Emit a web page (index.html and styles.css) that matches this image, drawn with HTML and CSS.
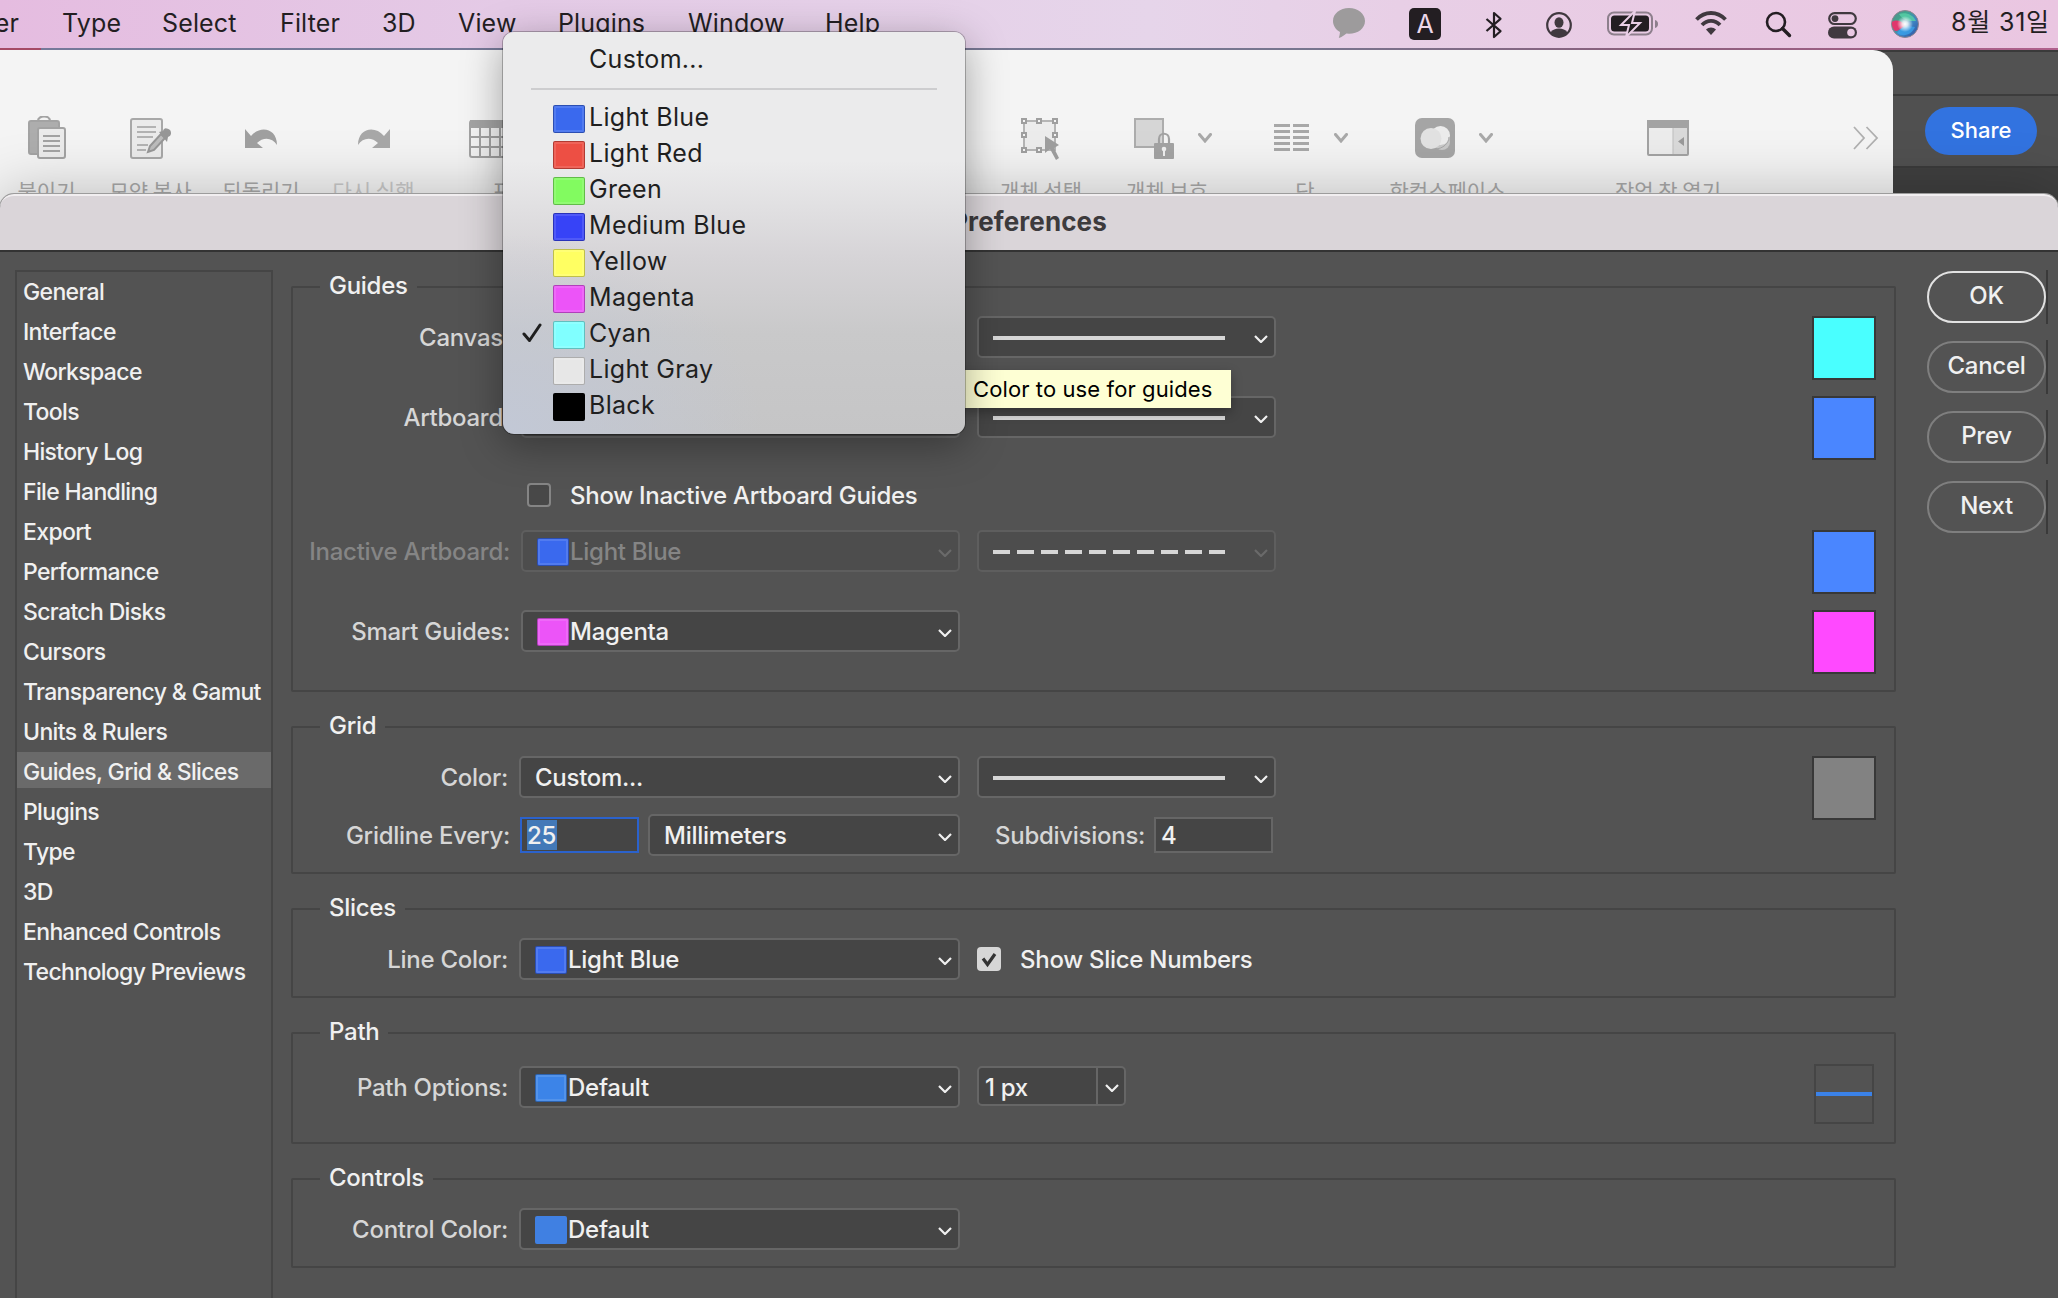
FILE: index.html
```
<!DOCTYPE html>
<html lang="en">
<head>
    <meta charset="UTF-8">
    <title>Preferences</title>
    <link rel="stylesheet" href="styles.css">
</head>
<body>
    <!-- Shared icons -->
    <svg class="defs" width="0" height="0">
        <symbol id="chevron" viewBox="0 0 14 8"><path d="M1 1l6 6 6-6" fill="none" stroke="currentColor" stroke-width="2.2"/></symbol>
        <symbol id="chevron-bold" viewBox="0 0 14 10"><path d="M1.5 1.5L7 8l5.500-6.500" fill="none" stroke="currentColor" stroke-width="3" stroke-linecap="round"/></symbol>
    </svg>

    <header class="menubar">
        <nav class="menus">
            <span class="m-layer">er</span>
            <span class="m-type">Type</span>
            <span class="m-select">Select</span>
            <span class="m-filter">Filter</span>
            <span class="m-3d">3D</span>
            <span class="m-view">View</span>
            <span class="m-plugins">Plugins</span>
            <span class="m-window">Window</span>
            <span class="m-help">Help</span>
        </nav>
        <div class="status">
            <svg class="s-chat" width="32" height="30" viewBox="0 0 32 30"><path d="M16 0C7 0 0 5.600 0 13c0 4.600 2.700 8.600 7 11-.1 2-.6 4-1.200 6 3-.8 5.600-2.600 7.600-4.400l2.600.2c9 0 16-5.500 16-12.800S25 0 16 0z" fill="#9d9b9c"/></svg>
            <span class="s-input">A</span>
            <svg class="s-bt" width="18" height="28" viewBox="0 0 18 28"><path d="M1.500 8l14 12.200L9 26V2l6.500 5.800L1.500 20" fill="none" stroke="#231e22" stroke-width="2.200" stroke-linejoin="round"/></svg>
            <svg class="s-user" width="26" height="26" viewBox="0 0 26 26"><circle cx="13" cy="13" r="11.800" fill="none" stroke="#40393f" stroke-width="2.200"/><ellipse cx="13" cy="10.500" rx="4.500" ry="5.200" fill="#40393f"/><path d="M4.500 20.500c2-3 5-4 8.500-4s6.500 1 8.500 4c-2 2.600-5 4-8.500 4s-6.500-1.400-8.500-4z" fill="#40393f"/></svg>
            <svg class="s-battery" width="52" height="26" viewBox="0 0 52 26"><rect x="1" y="1.500" width="44" height="22" rx="6" fill="none" stroke="#8d7f8c" stroke-width="2"/><path d="M48 9v8c2-.6 3-2 3-4s-1-3.400-3-4z" fill="#8d7f8c"/><rect x="4" y="4.500" width="38" height="16" rx="3.500" fill="#231e22"/><path d="M28 0L14 14h8l-3 12 14-14h-8z" fill="#231e22" stroke="#e9cee6" stroke-width="2"/></svg>
            <svg class="s-wifi" width="34" height="26" viewBox="0 0 34 26"><path d="M2.500 9.500C11 .8 23 .8 31.500 9.500M8 15c5-5.600 13-5.600 18 0" fill="none" stroke="#40393f" stroke-width="3.800"/><path d="M17 25l-5-5.400c2.600-2.700 7.400-2.700 10 0z" fill="#40393f"/></svg>
            <svg class="s-search" width="27" height="27" viewBox="0 0 27 27"><circle cx="11" cy="11" r="9" fill="none" stroke="#231e22" stroke-width="2.600"/><path d="M17.500 17.500l7 7" stroke="#231e22" stroke-width="3.400" stroke-linecap="round"/></svg>
            <svg class="s-control" width="29" height="27" viewBox="0 0 29 27"><rect x="1.200" y="1.200" width="26.600" height="10.800" rx="5.400" fill="none" stroke="#40393f" stroke-width="2.200"/><circle cx="7" cy="6.600" r="3.400" fill="#40393f"/><rect x="0" y="14.500" width="29" height="12" rx="6" fill="#40393f"/><circle cx="23" cy="20.500" r="3.800" fill="#eac9e3"/></svg>
            <svg class="s-siri" width="28" height="28" viewBox="0 0 28 28">
                <defs>
                    <linearGradient id="siri" x1="0" y1="0" x2="1" y2="1"><stop offset="0" stop-color="#5c7f94"/><stop offset=".3" stop-color="#3fa58a"/><stop offset=".6" stop-color="#3f86c4"/><stop offset="1" stop-color="#2b4a9b"/></linearGradient>
                    <radialGradient id="siri-glow"><stop offset="0" stop-color="#fff"/><stop offset=".35" stop-color="#fff" stop-opacity=".8"/><stop offset="1" stop-color="#fff" stop-opacity="0"/></radialGradient>
                </defs>
                <circle cx="14" cy="14" r="13.500" fill="url(#siri)" stroke="#8f8390"/>
                <path d="M1 12c4-3 10-1 13 3-4 4-7 6-10 6-2-2-3.500-5-3-9z" fill="#e0376d"/>
                <path d="M8 4c6-2 14 0 17 7-5 0-12 1-17-7z" fill="#58d1a6" opacity=".8"/>
                <path d="M6 23c4-6 9-8 18-6-3 7-11 11-18 6z" fill="#3aa0ea" opacity=".8"/>
                <circle cx="14" cy="14" r="8" fill="url(#siri-glow)"/>
            </svg>
            <span class="s-date">8월 31일</span>
        </div>
    </header>

    <div class="ps-window">
        <div class="ps-tabs"></div>
        <div class="ps-options"><span class="share">Share</span></div>
    </div>

    <div class="hwp-window">
        <div class="tool">
            <svg width="38" height="44" viewBox="0 0 38 44"><path d="M10 5c0-6 12-6 12 0" fill="none" stroke="#a3a3a3" stroke-width="2.200"/><rect x="1" y="5" width="30" height="33" rx="2" fill="#adadad" stroke="#a3a3a3" stroke-width="2"/><rect x="10" y="12" width="27" height="30" rx="2" fill="#ebebeb" stroke="#a3a3a3" stroke-width="2"/><path d="M15 20h17M15 25h17M15 30h17M15 35h17" stroke="#a3a3a3" stroke-width="2"/></svg>
            <span>붙이기</span>
        </div>
        <div class="tool">
            <svg width="42" height="44" viewBox="0 0 42 44"><rect x="1" y="3" width="31" height="39" rx="2" fill="#ebebeb" stroke="#a8a8a8" stroke-width="2"/><path d="M7 11h19M7 16h19M7 21h16M7 29h11M7 34h9" stroke="#b3b3b3" stroke-width="2"/><path d="M18 36l2-6 11-12 4 4-11 12z" fill="#bdbdbd" stroke="#979797" stroke-width="2"/><path d="M29 16l4-1c1-4 4-3 7-1 2 3 1 6-2 7l-1 5z" fill="#979797"/></svg>
            <span>모양 복사</span>
        </div>
        <div class="tool">
            <svg width="34" height="44" viewBox="0 0 34 44"><path d="M1 13v19h18l-6-5c6-6 15-6 20 2 0-17-17-20-26-9z" fill="#a0a0a0"/></svg>
            <span>되돌리기</span>
        </div>
        <div class="tool dim">
            <svg width="34" height="44" viewBox="0 0 34 44"><path d="M33 13v19H15l6-5C15 21 6 21 1 29c0-17 17-20 26-9z" fill="#a8a8a8"/></svg>
            <span>다시 실행</span>
        </div>
        <div class="tool more">
            <div class="glyph">
                <svg width="40" height="44" viewBox="0 0 40 44"><rect x="1" y="5" width="38" height="36" rx="2" fill="#f5f5f5" stroke="#a3a3a3" stroke-width="2"/><path d="M1 4h38v8H1z" fill="#a3a3a3"/><path d="M1 21h38M1 31h38M11 12v29M21 12v29M31 12v29" stroke="#a3a3a3" stroke-width="2"/></svg>
                <svg width="14" height="10"><use href="#chevron-bold"/></svg>
            </div>
            <span>표</span>
        </div>
        <div class="tool-space"></div>
        <div class="tool">
            <svg width="40" height="44" viewBox="0 0 40 44"><rect x="3" y="5" width="31" height="29" fill="#ececec" stroke="#b5b5b5" stroke-width="2"/><g fill="#f5f5f5" stroke="#9f9f9f" stroke-width="2"><rect x="1" y="3" width="4" height="4"/><rect x="16" y="3" width="4" height="4"/><rect x="32" y="3" width="4" height="4"/><rect x="1" y="17" width="4" height="4"/><rect x="32" y="17" width="4" height="4"/><rect x="1" y="32" width="4" height="4"/><rect x="16" y="32" width="4" height="4"/></g><path d="M24 20v17l5-4 6 11 3-2-5-10 5-3z" fill="#9f9f9f"/></svg>
            <span>개체 선택</span>
        </div>
        <div class="tool more">
            <div class="glyph">
                <svg width="40" height="44" viewBox="0 0 40 44"><rect x="1" y="3" width="28" height="28" fill="#d6d6d6" stroke="#adadad" stroke-width="2"/><path d="M25 28v-5c0-7 10-7 10 0v5" fill="none" stroke="#a3a3a3" stroke-width="2.200"/><rect x="20" y="27" width="20" height="16" rx="1" fill="#a3a3a3"/><circle cx="30" cy="33" r="2.300" fill="#f0f0f0"/><path d="M29 34h2v6h-2z" fill="#f0f0f0"/></svg>
                <svg width="14" height="10"><use href="#chevron-bold"/></svg>
            </div>
            <span>개체 보호</span>
        </div>
        <div class="tool more">
            <div class="glyph">
                <svg width="36" height="44" viewBox="0 0 36 44"><path d="M0 9.500h16m3 0h16M0 15.500h16m3 0h16M0 21.500h16m3 0h16M0 27.500h16m3 0h16M0 33.500h16m3 0h16" stroke="#a8a8a8" stroke-width="3"/></svg>
                <svg width="14" height="10"><use href="#chevron-bold"/></svg>
            </div>
            <span>단</span>
        </div>
        <div class="tool more">
            <div class="glyph">
                <svg width="40" height="44" viewBox="0 0 40 44"><rect x="0" y="2" width="40" height="40" rx="7" fill="#a5a5a5"/><circle cx="27" cy="26" r="8" fill="#c9c9c9"/><circle cx="25.500" cy="19.500" r="9.500" fill="#ececec"/><circle cx="16" cy="22.500" r="10.500" fill="#e2e2e2"/><path d="M20 33c8 0 14-6 14-12" fill="none" stroke="#a5a5a5" stroke-width="1"/></svg>
                <svg width="14" height="10"><use href="#chevron-bold"/></svg>
            </div>
            <span>한컴스페이스</span>
        </div>
        <div class="tool">
            <svg width="42" height="44" viewBox="0 0 42 44"><rect x="1" y="5" width="40" height="34" rx="1" fill="#ececec" stroke="#a3a3a3" stroke-width="2"/><path d="M26 12h14v26H26z" fill="#dadada"/><path d="M26 12v26" stroke="#bdbdbd"/><path d="M0 4h42v8H0z" fill="#a3a3a3"/><path d="M37 21v9l-6-4.500z" fill="#9a9a9a"/></svg>
            <span>작업 창 열기</span>
        </div>
        <svg class="overflow" width="26" height="24" viewBox="0 0 26 24"><path d="M1 1l10 11L1 23M13.500 1L24 12 13.500 23" fill="none" stroke="#b0b0b0" stroke-width="1.800"/></svg>
    </div>

    <div class="prefs">
        <div class="titlebar">Preferences</div>
        <div class="prefs-body">
            <ul class="sidebar">
                <li>General</li>
                <li>Interface</li>
                <li>Workspace</li>
                <li>Tools</li>
                <li>History Log</li>
                <li>File Handling</li>
                <li>Export</li>
                <li>Performance</li>
                <li>Scratch Disks</li>
                <li>Cursors</li>
                <li>Transparency &amp; Gamut</li>
                <li>Units &amp; Rulers</li>
                <li class="selected">Guides, Grid &amp; Slices</li>
                <li>Plugins</li>
                <li>Type</li>
                <li>3D</li>
                <li>Enhanced Controls</li>
                <li>Technology Previews</li>
            </ul>

            <div class="groups">
                <fieldset class="guides">
                    <legend>Guides</legend>
                    <div class="row">
                        <label>Canvas:</label>
                        <div class="select color"></div>
                        <div class="select style"><i class="line"></i><svg><use href="#chevron"/></svg></div>
                        <div class="swatch cyan"></div>
                    </div>
                    <div class="row">
                        <label>Artboard:</label>
                        <div class="select color"></div>
                        <div class="select style"><i class="line"></i><svg><use href="#chevron"/></svg></div>
                        <div class="swatch blue"></div>
                    </div>
                    <div class="row check-row">
                        <span class="checkbox"></span>Show Inactive Artboard Guides
                    </div>
                    <div class="row disabled">
                        <label>Inactive Artboard:</label>
                        <div class="select color"><i class="chip light-blue"></i>Light Blue<svg><use href="#chevron"/></svg></div>
                        <div class="select style"><i class="line dashed"></i><svg><use href="#chevron"/></svg></div>
                        <div class="swatch blue"></div>
                    </div>
                    <div class="row">
                        <label>Smart Guides:</label>
                        <div class="select color"><i class="chip magenta"></i>Magenta<svg><use href="#chevron"/></svg></div>
                        <div class="swatch pink"></div>
                    </div>
                </fieldset>

                <fieldset class="grid">
                    <legend>Grid</legend>
                    <div class="row">
                        <label>Color:</label>
                        <div class="select color">Custom...<svg><use href="#chevron"/></svg></div>
                        <div class="select style"><i class="line"></i><svg><use href="#chevron"/></svg></div>
                        <div class="swatch gray"></div>
                    </div>
                    <div class="row every">
                        <label>Gridline Every:</label>
                        <div class="input focused"><span>25</span></div>
                        <div class="select units">Millimeters<svg><use href="#chevron"/></svg></div>
                        <label class="sub">Subdivisions:</label>
                        <div class="input">4</div>
                    </div>
                </fieldset>

                <fieldset class="slices">
                    <legend>Slices</legend>
                    <div class="row">
                        <label>Line Color:</label>
                        <div class="select color"><i class="chip light-blue"></i>Light Blue<svg><use href="#chevron"/></svg></div>
                        <span class="checkbox checked"><svg viewBox="0 0 24 24"><path d="M6 11.500l4.500 6L18 7" fill="none" stroke="#333" stroke-width="3.200"/></svg></span>Show Slice Numbers
                    </div>
                </fieldset>

                <fieldset class="path">
                    <legend>Path</legend>
                    <div class="row">
                        <label>Path Options:</label>
                        <div class="select color"><i class="chip default"></i>Default<svg><use href="#chevron"/></svg></div>
                        <div class="combo"><span>1 px</span><svg><use href="#chevron"/></svg></div>
                        <div class="preview"></div>
                    </div>
                </fieldset>

                <fieldset class="controls">
                    <legend>Controls</legend>
                    <div class="row">
                        <label>Control Color:</label>
                        <div class="select color"><i class="chip control"></i>Default<svg><use href="#chevron"/></svg></div>
                    </div>
                </fieldset>
            </div>

            <div class="actions">
                <div class="action"><span class="btn primary">OK</span></div>
                <div class="action"><span class="btn">Cancel</span></div>
                <div class="action"><span class="btn">Prev</span></div>
                <div class="action"><span class="btn">Next</span></div>
            </div>
        </div>
    </div>

    <div class="tooltip">Color to use for guides</div>

    <ul class="popup">
        <li>Custom...</li>
        <li class="separator"></li>
        <li><i class="chip light-blue"></i>Light Blue</li>
        <li><i class="chip light-red"></i>Light Red</li>
        <li><i class="chip green"></i>Green</li>
        <li><i class="chip medium-blue"></i>Medium Blue</li>
        <li><i class="chip yellow"></i>Yellow</li>
        <li><i class="chip magenta"></i>Magenta</li>
        <li><svg class="tick" width="20" height="20" viewBox="0 0 20 20"><path d="M2 11l5.500 6.500L18 2" fill="none" stroke="#1f1f1f" stroke-width="3" stroke-linecap="round" stroke-linejoin="round"/></svg><i class="chip light-cyan"></i>Cyan</li>
        <li><i class="chip light-gray"></i>Light Gray</li>
        <li><i class="chip black"></i>Black</li>
    </ul>
</body>
</html>
```

FILE: styles.css
```
* {
    box-sizing: border-box;
}
body {
    margin: 0;
    width: 2058px;
    height: 1298px;
    overflow: hidden;
    position: relative;
    background: #535353;
    font-family: Inter, "Noto Sans CJK KR", sans-serif;
    font-size: 24px;
    color: #f0f0f0;
}
ul {
    margin: 0;
    padding: 0;
    list-style: none;
}
.defs {
    position: absolute;
}

/* macOS menu bar */
.menubar {
    display: flex;
    height: 50px;
    border-bottom: 2px solid;
    border-image: linear-gradient(90deg, #a54a66 42px, #75799a 42px, #77768f 1300px, #8b5f7c 1650px, #b0608c 2058px) 1;
    background: linear-gradient(90deg, #e5bce0, #e4cae6 500px, #e6d5ea 1150px, #e8cfe6 1400px, #eac6e1);
    color: #231e22;
    font-size: 25px;
    line-height: 47px;
}
.menus {
    display: flex;
    width: 1333px;
    letter-spacing: 0.15px;
    white-space: nowrap;
}
.m-layer { width: 62px; direction: rtl; padding-right: 43px; }
.m-type { width: 100px; }
.m-select { width: 118px; }
.m-filter { width: 102px; }
.m-3d { width: 76px; }
.m-view { width: 100px; }
.m-plugins { width: 130px; }
.m-window { width: 137px; }
.status {
    display: flex;
    align-items: flex-start;
}
.s-chat { margin: 8px 44px 0 0; }
.s-input {
    width: 32px;
    height: 32px;
    margin: 8px 44px 0 0;
    border-radius: 5px;
    background: #231e22;
    color: #ecd8ea;
    font-size: 25px;
    line-height: 32px;
    text-align: center;
}
.s-bt { margin: 11px 43px 0 0; }
.s-user { margin: 12px 35px 0 0; }
.s-battery { margin: 11px 35px 0 0; }
.s-wifi { margin: 10px 37px 0 0; }
.s-search { margin: 11px 36px 0 0; }
.s-control { margin: 12px 34px 0 0; }
.s-siri { margin: 10px 32px 0 0; }
.s-date {
    letter-spacing: 0.8px;
    line-height: 45px;
    white-space: nowrap;
}

/* Application window at the back */
.ps-window {
    position: absolute;
    top: 50px;
    left: 1850px;
    width: 208px;
    height: 150px;
    border-top: 2px solid #3a3a3a;
    background: #3f3f3f;
}
.ps-tabs {
    height: 44px;
    border-bottom: 2px solid #3c3c3c;
    background: #525252;
}
.ps-options {
    height: 72px;
    padding: 11px 0 0 75px;
    border-bottom: 2px solid #3a3a3a;
    background: #505050;
}
.share {
    display: block;
    width: 112px;
    height: 48px;
    border-radius: 24px;
    background: #3273e0;
    color: #fff;
    font-size: 22px;
    font-weight: 500;
    line-height: 46px;
    text-align: center;
}

/* Word processor window with its toolbar */
.hwp-window {
    position: absolute;
    top: 50px;
    left: 0;
    width: 1893px;
    height: 170px;
    border-radius: 0 20px 0 0;
    background: #f4f4f4;
    display: grid;
    grid-template-columns: 93px 115px 106px 119px 138px 394px 152px 100px 176px 109px 332px 1fr;
    color: #a9a9a9;
    font: 21px/30px "Noto Sans CJK KR", sans-serif;
}
.tool {
    display: flex;
    flex-direction: column;
    align-items: center;
    padding-top: 66px;
    white-space: nowrap;
}
.tool span {
    margin-top: 15px;
}
.tool.dim span {
    color: #c9c9c9;
}
.glyph {
    display: flex;
    align-items: center;
    gap: 24px;
    padding-left: 12px;
}
.overflow {
    margin: 76px 0 0 19px;
}

/* Preferences dialog */
.prefs {
    position: absolute;
    top: 194px;
    left: 0;
    width: 2058px;
    height: 1104px;
    border-radius: 14px 14px 0 0;
    background: #535353;
    box-shadow: 0 0 0 1px #9c9c9c, 0 0 60px rgba(0, 0, 0, 0.25);
}
.titlebar {
    height: 58px;
    border-top: 2px solid #f1eef0;
    border-bottom: 2px solid #333;
    border-radius: 14px 14px 0 0;
    background: #dad5d9;
    color: #3d3b3d;
    font-size: 26px;
    font-weight: 700;
    letter-spacing: 0.1px;
    line-height: 51px;
    text-align: center;
}
.prefs-body {
    display: flex;
    height: 1046px;
    padding-left: 15px;
    font-weight: 500;
    letter-spacing: -0.27px;
}
.sidebar {
    width: 258px;
    margin-top: 18px;
    border: 2px solid #454545;
    border-bottom: 0;
    font-size: 23px;
    letter-spacing: -0.65px;
    line-height: 41px;
    white-space: nowrap;
}
.sidebar li {
    height: 36px;
    margin-bottom: 4px;
    padding-left: 6px;
}
.sidebar .selected {
    background: #6a6a6a;
}
.groups {
    width: 1605px;
    margin: 34px 31px 0 18px;
}
fieldset {
    min-width: 0;
    margin: 0 0 34px;
    padding: 28px 18px 0 0;
    border: 2px solid #454545;
    border-radius: 2px;
}
legend {
    height: 2px;
    margin-left: 27px;
    padding: 0 9px;
    line-height: 0;
}
.guides { height: 406px; }
.grid { height: 148px; }
.slices { height: 90px; }
.path { height: 112px; padding-top: 32px; }
.controls { height: 90px; }
.row {
    display: flex;
    align-items: center;
    height: 42px;
    white-space: nowrap;
}
.guides .row {
    margin-bottom: 38px;
}
.guides .check-row {
    height: 24px;
    margin: 45px 0 23px;
    padding-left: 234px;
}
.row label {
    width: 215px;
    margin-right: 11px;
    color: #d6d6d6;
    text-align: right;
}
.guides label {
    width: 217px;
}
.select {
    display: flex;
    align-items: center;
    height: 42px;
    padding: 0 6px 0 14px;
    border: 2px solid #666;
    border-radius: 5px;
    background: #454545;
}
.select svg {
    width: 14px;
    height: 8px;
    margin: 4px 0 0 auto;
}
.select.color {
    width: 441px;
    margin-right: 17px;
}
.guides .color {
    width: 439px;
}
.select.style {
    width: 299px;
}
.select.units {
    width: 312px;
    margin: 0 35px 0 9px;
}
.chip {
    flex: none;
    width: 32px;
    height: 28px;
    margin: 2px 1px 0 0;
    border: 1px solid rgba(0, 0, 0, 0.25);
    border-radius: 2px;
    box-shadow: inset 0 0 0 2px rgba(255, 255, 255, 0.12);
}
.line {
    width: 232px;
    height: 4px;
    margin-top: 2px;
    background: #d6d6d6;
}
.line.dashed {
    background: repeating-linear-gradient(90deg, #d6d6d6 0 17px, transparent 17px 24px);
}
.disabled label,
.disabled .select {
    color: #858585;
}
.disabled .select {
    border-color: #5e5e5e;
    background: #4d4d4d;
}
.disabled .select svg {
    color: #6a6a6a;
}
.swatch {
    align-self: flex-start;
    flex: none;
    width: 64px;
    height: 64px;
    margin-left: auto;
    border: 2px solid #383838;
}
.checkbox {
    width: 24px;
    height: 24px;
    margin-right: 19px;
    border: 2px solid #858585;
    border-radius: 4px;
    background: #484848;
}
.checkbox.checked {
    border: 0;
    background: #d6d6d6;
}
.checkbox svg {
    display: block;
}
.every {
    margin-top: 16px;
}
.every label {
    width: 217px;
    margin-right: 10px;
}
.every .sub {
    width: 149px;
}
.input {
    width: 119px;
    height: 36px;
    padding-left: 5px;
    border: 2px solid #666;
    background: #454545;
    line-height: 33px;
}
.input.focused {
    padding: 1px 0 0 5px;
    border-color: #2b62cc;
    line-height: 31px;
}
.input span {
    display: block;
    width: 30px;
    height: 30px;
    background: #4379b8;
}
.combo {
    display: flex;
    align-items: center;
    align-self: flex-start;
    width: 149px;
    height: 40px;
    border: 2px solid #666;
    border-radius: 5px;
    background: #454545;
}
.combo span {
    width: 119px;
    padding-left: 6px;
    border-right: 2px solid #666;
    line-height: 36px;
    padding-top: 2px;
    height: 36px;
}
.combo svg {
    width: 14px;
    height: 8px;
    margin: 4px 0 0 7px;
}
.preview {
    align-self: flex-start;
    flex: none;
    width: 60px;
    height: 60px;
    margin: -2px 2px 0 auto;
    border: 2px solid #454545;
    background: linear-gradient(#3b82e8, #3b82e8) 0 26px / 56px 4px no-repeat;
}

/* Dialog buttons */
.actions {
    margin-top: 18px;
}
.action {
    width: 121px;
    height: 54px;
    margin-bottom: 16px;
    padding: 1px 0;
    border-right: 2px solid #3a3a3a;
}
.btn {
    display: block;
    width: 119px;
    height: 52px;
    border: 2px solid #7f7f7f;
    border-radius: 26px;
    line-height: 45px;
    text-align: center;
}
.btn.primary {
    border-color: #e2e2e2;
}

/* Tooltip and colour menu */
.tooltip {
    position: absolute;
    top: 370px;
    left: 955px;
    width: 276px;
    height: 38px;
    padding-left: 18px;
    background: #feffd4;
    box-shadow: 0 4px 12px rgba(0, 0, 0, 0.3);
    color: #000;
    font-size: 22px;
    letter-spacing: 0.1px;
    line-height: 38px;
    white-space: nowrap;
}
.popup {
    position: absolute;
    top: 32px;
    left: 503px;
    width: 462px;
    height: 402px;
    padding-top: 9px;
    border-radius: 11px;
    background: radial-gradient(260px 200px at 0 100%, #c2c8d6 0, rgba(194, 200, 214, 0) 100%), linear-gradient(#ebebec 0, #ebebec 32%, #d6d4d7 56%, #c9c9ca 75%, #c5c5c6);
    box-shadow: 0 0 0 1px rgba(0, 0, 0, 0.25), 0 10px 40px rgba(0, 0, 0, 0.35);
    color: #1f1f1f;
    font-size: 25px;
    letter-spacing: 0.3px;
}
.popup li {
    display: flex;
    align-items: center;
    height: 36px;
    padding-left: 50px;
}
.popup li:first-child {
    padding-left: 86px;
}
.popup .separator {
    height: 2px;
    margin: 11px 28px 9px;
    padding: 0;
    background: #cdcdcf;
}
.popup .chip {
    margin: 4px 4px 0 0;
}
.tick {
    margin: 0 11px 0 -31px;
}

.cyan { background: #49ffff; }
.light-cyan { background: #80ffff; }
.blue { background: #4a86ff; }
.pink { background: #ff49ff; }
.gray { background: #828282; }
.light-blue { background: #3a69ee; }
.light-red { background: #ed4f44; }
.green { background: #82fb60; }
.medium-blue { background: #3743f7; }
.yellow { background: #ffff62; }
.magenta { background: #ec54f8; }
.light-gray { background: #e7e7e7; }
.black { background: #000; box-shadow: none; }
.default { background: #3c84e8; }
.control { background: #4080e2; border: 0; box-shadow: none; }
```
